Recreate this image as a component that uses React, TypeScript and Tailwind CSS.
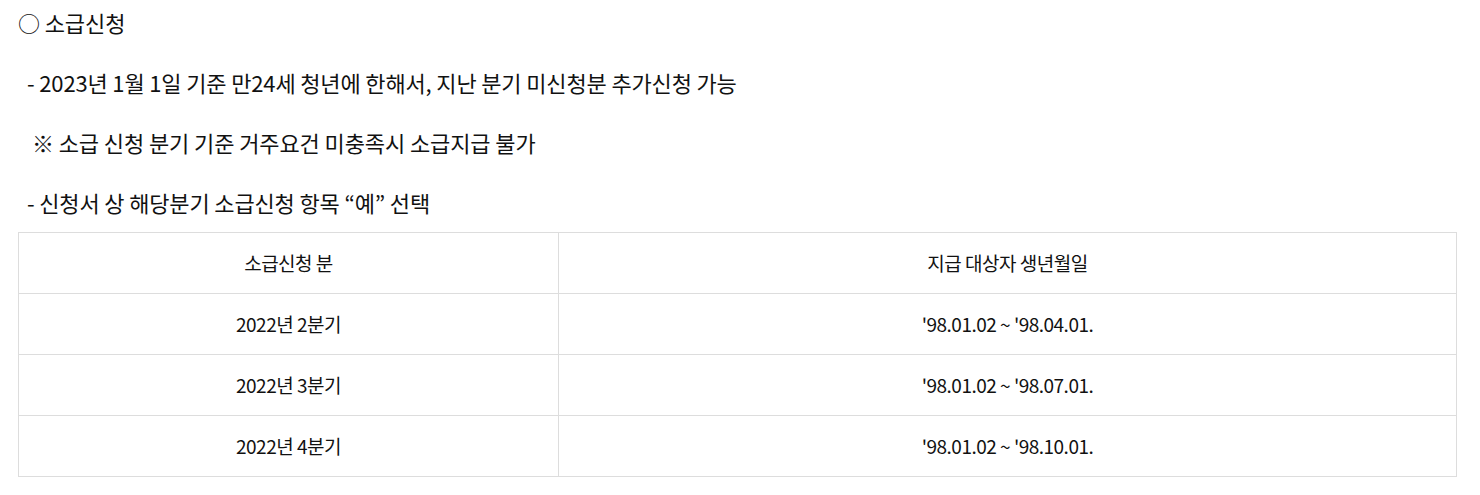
const rows = [
  { period: '2022년 2분기', range: "'98.01.02 ~ '98.04.01." },
  { period: '2022년 3분기', range: "'98.01.02 ~ '98.07.01." },
  { period: '2022년 4분기', range: "'98.01.02 ~ '98.10.01." },
];

export default function App() {
  return (
    <div
      className="w-[1480px] h-[495px] bg-white text-[#111] overflow-hidden"
      style={{ fontFamily: '"Noto Sans CJK KR", "Noto Sans", sans-serif' }}
    >
      <div className="pl-[18px] pr-[23px] pt-[4px]">
        <p className="text-[22px] leading-[36px] tracking-[-0.1px]">○ 소급신청</p>
        <p className="mt-[24px] pl-[9px] text-[22px] leading-[36px] tracking-[-0.15px]">
          - 2023년 1월 1일 기준 만24세 청년에 한해서, 지난 분기 미신청분 추가신청 가능
        </p>
        <p className="mt-[24px] pl-[14px] text-[22px] leading-[36px] tracking-[-0.1px]">
          ※ 소급 신청 분기 기준 거주요건 미충족시 소급지급 불가
        </p>
        <p className="mt-[24px] pl-[9px] text-[22px] leading-[36px] tracking-[-0.15px]">
          - 신청서 상 해당분기 소급신청 항목 “예” 선택
        </p>
        <table className="mt-[12px] w-full border-collapse text-[19px] tracking-[-0.5px] text-center">
          <tbody>
            <tr className="h-[61px]">
              <td className="w-[540px] border border-[#dddddd]">소급신청 분</td>
              <td className="border border-[#dddddd]">지급 대상자 생년월일</td>
            </tr>
            {rows.map((r) => (
              <tr key={r.period} className="h-[61px]">
                <td className="border border-[#dddddd]">{r.period}</td>
                <td className="border border-[#dddddd]">{r.range}</td>
              </tr>
            ))}
          </tbody>
        </table>
      </div>
    </div>
  );
}
